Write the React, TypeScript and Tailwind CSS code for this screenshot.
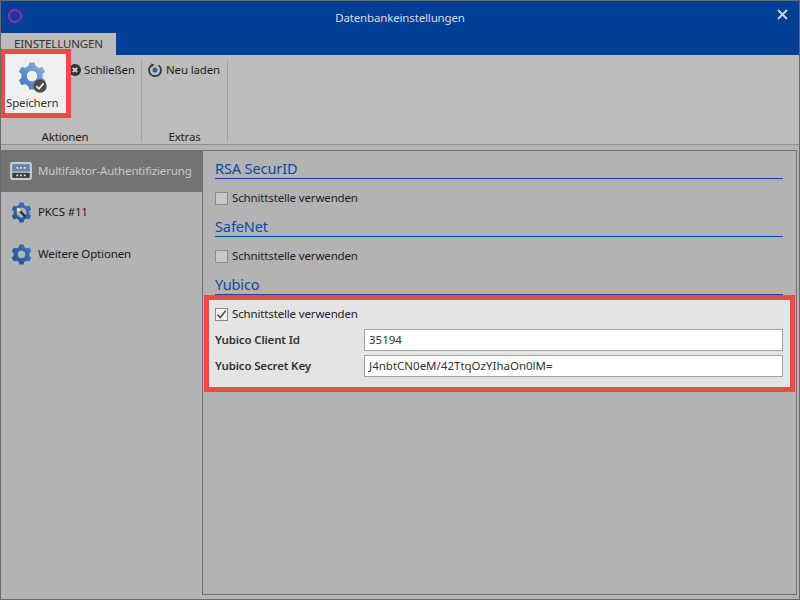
import React from "react";

function gearPath(cx: number, cy: number, rOut: number, rIn: number, rHole: number, teeth = 6) {
  const pts: string[] = [];
  const step = (Math.PI * 2) / teeth;
  for (let i = 0; i < teeth; i++) {
    const a = -Math.PI / 2 + i * step;
    const list: [number, number][] = [
      [rIn, a - step * 0.32],
      [rOut, a - step * 0.2],
      [rOut, a + step * 0.2],
      [rIn, a + step * 0.32],
    ];
    for (const [r, t] of list) pts.push(`${(cx + r * Math.cos(t)).toFixed(2)} ${(cy + r * Math.sin(t)).toFixed(2)}`);
  }
  const hole = `M${cx - rHole} ${cy}a${rHole} ${rHole} 0 1 0 ${rHole * 2} 0a${rHole} ${rHole} 0 1 0 ${-rHole * 2} 0Z`;
  return `M${pts.join("L")}Z${hole}`;
}

function Gear({ size, id, from, to, hole = 4.2, children }: { size: number; id: string; from: string; to: string; hole?: number; children?: React.ReactNode }) {
  return (
    <svg width={size} height={size} viewBox="0 0 24 24" className="shrink-0">
      <defs>
        <linearGradient id={id} x1="1" y1="0" x2="0" y2="1">
          <stop offset="0" stopColor={from} />
          <stop offset="1" stopColor={to} />
        </linearGradient>
      </defs>
      <path d={gearPath(12, 12, 11.8, 9.2, hole)} fill={`url(#${id})`} fillRule="evenodd" />
      {children}
    </svg>
  );
}

function Check({ checked }: { checked?: boolean }) {
  return (
    <span className={`w-[13px] h-[13px] border border-[#8a8a8a] flex items-center justify-center shrink-0 ${checked ? "bg-[#f2f2f2]" : "bg-[#c8c8c8]"}`}>
      {checked && (
        <svg width="11" height="11" viewBox="0 0 11 11">
          <path d="M1.5 5.8 L4.2 8.6 L9.6 1.8" fill="none" stroke="#444" strokeWidth="1.5" />
        </svg>
      )}
    </span>
  );
}

function Heading({ children }: { children: string }) {
  return (
    <div className="h-[21px] border-b border-[#0b49a3] text-[#0b49a3] text-[14.5px] leading-[20px] tracking-[-0.1px]">{children}</div>
  );
}

function CheckRow({ checked }: { checked?: boolean }) {
  return (
    <div className="flex items-center gap-[4px] h-[16px] text-[11.5px] tracking-[-0.15px] text-[#222]">
      <Check checked={checked} />
      <span>Schnittstelle verwenden</span>
    </div>
  );
}

function Field({ label, value }: { label: string; value: string }) {
  return (
    <div className="flex items-center h-[22px]">
      <span className="w-[149px] font-semibold text-[11.5px] text-[#333] tracking-[-0.15px]">{label}</span>
      <div className="w-[419px] h-[22px] bg-white border border-[#a3a3a3] flex items-center pl-[4px] text-[11.5px] tracking-[0px] text-[#333]">{value}</div>
    </div>
  );
}

function NavItem({ active, icon, label }: { active?: boolean; icon: React.ReactNode; label: string }) {
  return (
    <div className={`h-[42px] flex items-center pl-[9px] gap-[6px] text-[11.5px] tracking-[-0.15px] whitespace-nowrap ${active ? "bg-[#737373] text-[#c9c9c9]" : "text-[#1a1a1a] pb-[2px]"}`}>
      <span className="w-[22px] flex justify-center">{icon}</span>
      <span>{label}</span>
    </div>
  );
}

export default function App() {
  return (
    <div className="relative w-[800px] h-[600px] overflow-hidden border border-[#6a6a6a] bg-[#b3b3b3] flex flex-col" style={{ fontFamily: '"Noto Sans","Open Sans",sans-serif' }}>
      {/* title bar */}
      <div className="h-[54px] shrink-0 bg-[#003f94] flex flex-col">
        <div className="h-[32px] flex items-start justify-between px-[6px] relative">
          <svg width="16" height="16" viewBox="0 0 16 16" className="mt-[7px]">
            <circle cx="8" cy="8" r="6" fill="none" stroke="#6d2aa6" strokeWidth="2.8" />
            <circle cx="8" cy="8" r="6" fill="none" stroke="#a050c8" strokeWidth="1" strokeDasharray="1 1.6" />
          </svg>
          <span className="text-[11.5px] tracking-[-0.15px] text-[#d6dbe6] mt-[8px]">Datenbankeinstellungen</span>
          <svg width="11" height="11" viewBox="0 0 11 11" className="mr-[5px] mt-[8px]">
            <path d="M1 1 L10 10 M10 1 L1 10" stroke="#c9d4e4" strokeWidth="2" />
          </svg>
        </div>
        <div className="h-[22px] w-[115px] bg-[#bcbcbc] flex items-center justify-center text-[11.5px] tracking-[-0.15px] text-[#333]">EINSTELLUNGEN</div>
      </div>

      {/* ribbon */}
      <div className="h-[90px] shrink-0 bg-[#bcbcbc] border-b border-[#8e8e8e] flex pt-[5px]">
        <div className="w-[141px] h-[82px] border-r border-[#a3a3a3] flex flex-col">
          <div className="h-[69px] shrink-0 pl-[68px] pt-[1px]">
            <div className="flex items-center gap-[3px] text-[11.5px] tracking-[-0.15px] text-[#222]">
              <svg width="12" height="12" viewBox="0 0 12 12">
                <circle cx="6" cy="6" r="6" fill="#333" />
                <path d="M3.8 3.8 L8.2 8.2 M8.2 3.8 L3.8 8.2" stroke="#ddd" strokeWidth="1.8" />
              </svg>
              <span>Schließen</span>
            </div>
          </div>
          <div className="text-center leading-[16px] text-[11.5px] tracking-[-0.15px] text-[#222] pr-[12px]">Aktionen</div>
        </div>
        <div className="w-[86px] h-[82px] border-r border-[#a3a3a3] flex flex-col">
          <div className="h-[69px] shrink-0 pl-[6px] pt-[1px]">
            <div className="flex items-center gap-[4px] text-[11.5px] tracking-[-0.15px] text-[#222]">
              <svg width="14" height="14" viewBox="0 0 14 14">
                <path d="M10.6 2.4 A6 6 0 1 1 3.4 2.4" fill="none" stroke="#333" strokeWidth="1.7" />
                <path d="M3 0.6 L6.4 1.6 L3.4 4.4Z" fill="#333" />
                <circle cx="7" cy="7" r="2.5" fill="#2b62b0" />
              </svg>
              <span>Neu laden</span>
            </div>
          </div>
          <div className="text-center leading-[16px] text-[11.5px] tracking-[-0.15px] text-[#222]">Extras</div>
        </div>
      </div>

      {/* body */}
      <div className="flex-1 flex pt-[5px] pb-[4px] min-h-0">
        <div className="w-[201px] shrink-0">
          <NavItem
            active
            label="Multifaktor-Authentifizierung"
            icon={
              <svg width="24" height="20" viewBox="0 0 24 20">
                <rect x="0.7" y="0.7" width="22.6" height="18.6" rx="1.5" fill="#c8c8c8" stroke="#d5d5d5" />
                <rect x="2.5" y="2.5" width="19" height="8" fill="#6484ad" />
                <rect x="2.5" y="12" width="19" height="5.5" fill="#3a3a3a" />
                <path d="M7 6.5h2M11 6.5h2M15 6.5h2" stroke="#e8e8e8" strokeWidth="2" />
                <path d="M7 14.7h2M11 14.7h2M15 14.7h2" stroke="#e8e8e8" strokeWidth="2" />
              </svg>
            }
          />
          <NavItem
            label="PKCS #11"
            icon={
              <Gear size={21} id="g2" from="#3f78bd" to="#1f4f94" hole={5.6}>
                <path d="M9.5 9.5 L16.5 17" stroke="#2f2f2f" strokeWidth="2.6" />
                <path d="M7 7.5 L10.5 10.5" stroke="#e2e2e2" strokeWidth="3" />
              </Gear>
            }
          />
          <NavItem label="Weitere Optionen" icon={<Gear size={21} id="g3" from="#3f78bd" to="#1f4f94" />} />
        </div>
        <div className="flex-1 mr-[2px] border border-[#6f6f6f] flex flex-col pt-[7px]">
          <div className="pl-[12px] pr-[13px]">
            <Heading>RSA SecurID</Heading>
            <div className="pt-[11px] pb-[10px]"><CheckRow /></div>
            <Heading>SafeNet</Heading>
            <div className="pt-[11px] pb-[10px]"><CheckRow /></div>
            <Heading>Yubico</Heading>
          </div>
          <div className="ml-[1px] mr-[1px] h-[97px] border-[5px] border-[#e94b47] bg-[#e4e4e4] pl-[6px] pt-[6px] flex flex-col">
            <CheckRow checked />
            <div className="mt-[7px] flex flex-col gap-[4px]">
              <Field label="Yubico Client Id" value="35194" />
              <Field label="Yubico Secret Key" value="J4nbtCN0eM/42TtqOzYIhaOn0lM=" />
            </div>
          </div>
        </div>
      </div>

      {/* highlighted save button */}
      <div className="absolute -left-px top-[48px] w-[71px] h-[69px] border-[5px] border-[#ef4a47] bg-[#f0f0f0] flex flex-col items-start">
        <div className="relative mt-[8px] ml-[13px] w-[28px] h-[28px]">
          <Gear size={28} id="g1" from="#8fb6e0" to="#3d72b8" hole={4.5} />
          <svg width="14" height="14" viewBox="0 0 14 14" className="absolute left-[15px] top-[17px]">
            <circle cx="7" cy="7" r="6.7" fill="#4c4c4c" />
            <path d="M3.3 7.2 L6 9.8 L10.6 4.4" fill="none" stroke="#eee" strokeWidth="1.8" />
          </svg>
        </div>
        <span className="text-[11.5px] tracking-[-0.15px] text-[#333] mt-[5px] ml-[1px] leading-[16px]">Speichern</span>
      </div>
    </div>
  );
}
